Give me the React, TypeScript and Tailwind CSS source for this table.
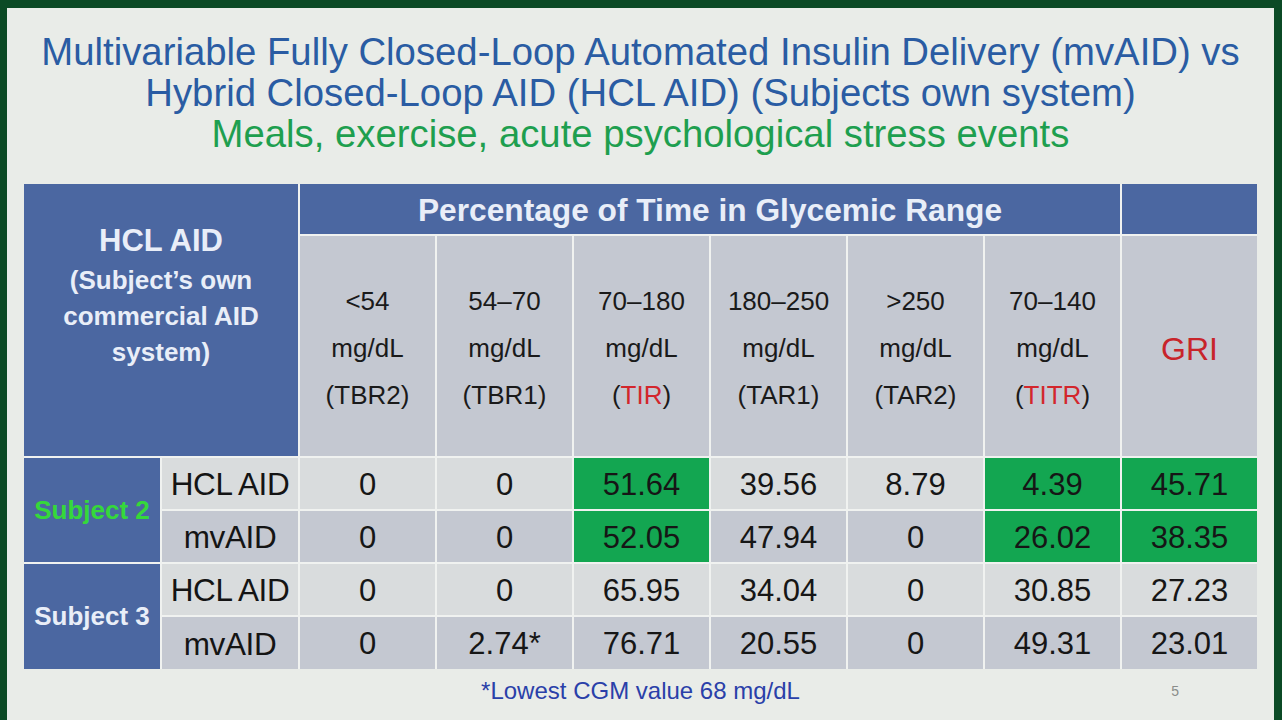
const font = { fontFamily: '"Liberation Sans", Arial, sans-serif' };

type Row = {
  label: string;
  values: string[];
  green: boolean[];
  shade: 'light' | 'dark';
};

const ranges = [
  { range: '<54', code: 'TBR2', red: false },
  { range: '54–70', code: 'TBR1', red: false },
  { range: '70–180', code: 'TIR', red: true },
  { range: '180–250', code: 'TAR1', red: false },
  { range: '>250', code: 'TAR2', red: false },
  { range: '70–140', code: 'TITR', red: true },
];

const subjects: { name: string; nameClass: string; rows: Row[] }[] = [
  {
    name: 'Subject 2',
    nameClass: 'text-[#35d83a]',
    rows: [
      {
        label: 'HCL AID',
        values: ['0', '0', '51.64', '39.56', '8.79', '4.39', '45.71'],
        green: [false, false, true, false, false, true, true],
        shade: 'light',
      },
      {
        label: 'mvAID',
        values: ['0', '0', '52.05', '47.94', '0', '26.02', '38.35'],
        green: [false, false, true, false, false, true, true],
        shade: 'dark',
      },
    ],
  },
  {
    name: 'Subject 3',
    nameClass: 'text-[#e9eef8]',
    rows: [
      {
        label: 'HCL AID',
        values: ['0', '0', '65.95', '34.04', '0', '30.85', '27.23'],
        green: [false, false, false, false, false, false, false],
        shade: 'light',
      },
      {
        label: 'mvAID',
        values: ['0', '2.74*', '76.71', '20.55', '0', '49.31', '23.01'],
        green: [false, false, false, false, false, false, false],
        shade: 'dark',
      },
    ],
  },
];

function DataRow({ row }: { row: Row }) {
  const base = row.shade === 'light' ? 'bg-[#d9dcdd]' : 'bg-[#c4c8d1]';
  return (
    <>
      <div className={`${base} flex items-center justify-center pt-[3px] text-[31.5px] tracking-[-0.4px] text-[#141414]`}>
        {row.label}
      </div>
      {row.values.map((v, i) => (
        <div
          key={i}
          className={`${row.green[i] ? 'bg-[#13a651]' : base} flex items-center justify-center pt-[3px] text-[31px] text-[#161616]`}
        >
          {v}
        </div>
      ))}
    </>
  );
}

export default function App() {
  return (
    <div className="w-[1282px] h-[720px] bg-[#0b4a25] pt-[8px] pl-[7px] pr-[8px] overflow-hidden" style={font}>
      <div className="h-full bg-[#e9ece8] flex flex-col items-center">
        {/* Title */}
        <div className="pt-[23px] text-center leading-[41px] whitespace-nowrap">
          <div className="text-[38.3px] text-[#2a5ca3]">
            Multivariable Fully Closed-Loop Automated Insulin Delivery (mvAID) vs
          </div>
          <div className="text-[38.3px] text-[#2a5ca3]">
            Hybrid Closed-Loop AID (HCL AID) (Subjects own system)
          </div>
          <div className="text-[38.3px] text-[#1e9f4f]">
            Meals, exercise, acute psychological stress events
          </div>
        </div>

        {/* Table */}
        <div className="mt-[30px] grid grid-cols-[136px_136px_repeat(7,135px)] grid-rows-[50px_220px_51px_51px_51px_52px] gap-[2px] bg-[#f0f2f0]">
          <div className="col-span-2 row-span-2 bg-[#4b67a1] flex flex-col items-center justify-center pb-[50px] font-bold text-[#e9eef8] text-center">
            <div className="text-[31px] leading-[42px]">HCL AID</div>
            <div className="text-[26px] leading-[36px]">
              (Subject’s own
              <br />
              commercial AID
              <br />
              system)
            </div>
          </div>
          <div className="col-span-6 bg-[#4b67a1] flex items-center justify-center pt-[3px] text-[31.7px] font-bold text-[#e9eef8]">
            Percentage of Time in Glycemic Range
          </div>
          <div className="bg-[#4b67a1]" />

          {ranges.map((r) => (
            <div
              key={r.code}
              className="bg-[#c4c8d1] flex flex-col items-center justify-center pt-[5px] text-[26px] leading-[47px] text-[#1a1a1a]"
            >
              <div>{r.range}</div>
              <div>mg/dL</div>
              <div>
                (<span className={r.red ? 'text-[#d3262c]' : ''}>{r.code}</span>)
              </div>
            </div>
          ))}
          <div className="bg-[#c4c8d1] flex items-center justify-center pt-[5px] text-[32px] text-[#c8242a]">GRI</div>

          {subjects.map((s, si) => (
            <div key={s.name} className="contents">
              <div
                className={`col-start-1 row-span-2 ${si === 0 ? 'row-start-3' : 'row-start-5'} bg-[#4b67a1] flex items-center justify-center text-[26px] font-bold ${s.nameClass}`}
              >
                {s.name}
              </div>
              {s.rows.map((row, ri) => (
                <div key={ri} className="contents">
                  <DataRow row={row} />
                </div>
              ))}
            </div>
          ))}
        </div>

        {/* Footer */}
        <div className="w-full relative">
          <div className="text-center text-[24px] leading-[28px] text-[#2a40a9] pt-[8px]">*Lowest CGM value 68 mg/dL</div>
          <div className="absolute right-[95px] top-[12px] text-[14px] text-[#8a8d8a]">5</div>
        </div>
      </div>
    </div>
  );
}
